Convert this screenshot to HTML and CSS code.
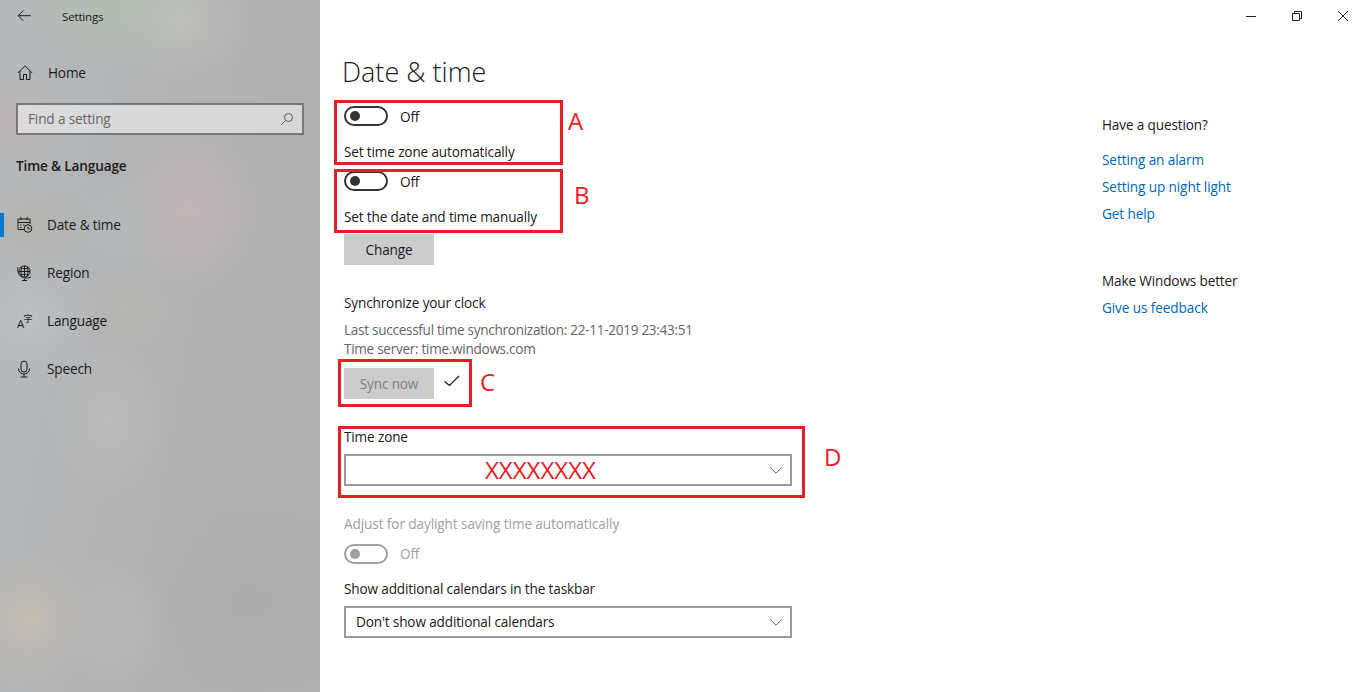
FILE: index.html
```html
<!DOCTYPE html>
<html lang="en">
<head>
  <meta charset="UTF-8" />
  <title>Settings</title>
  <link rel="stylesheet" href="styles.css">
</head>
<body>

<div class="ventana">

  <nav class="lateral">
    <div class="titulo-app">
      <svg class="icono" width="16" height="16" viewBox="0 0 16 16"><path d="M1.300 7.700H14M6.300 2.500 1.200 7.700l5.100 5.100" /></svg>
      <span>Settings</span>
    </div>

    <div class="item-home">
      <svg class="icono" width="16" height="16" viewBox="0 0 16 16"><path d="M.8 8 8 .8 15.200 8M3 6v8.500h3.500V9.500h3v5H13V6" /></svg>
      <span>Home</span>
    </div>

    <div class="buscador">
      <span>Find a setting</span>
      <svg class="icono-busca" width="14" height="14" viewBox="0 0 14 14"><circle cx="8.500" cy="5.500" r="4" /><path d="M5.600 8.400 1 13" /></svg>
    </div>

    <div class="seccion">Time &amp; Language</div>

    <div class="item activo">
      <svg class="icono" width="16" height="18" viewBox="0 0 16 18"><path d="M7 13.500H1V3h12v5M1 6.500h12M4 1v3M10 1v3M3 9h1.500M6 9h1.500M3 11.500h1.500" /><circle cx="11" cy="12.500" r="3.800" /><path d="M11 10.500v2.300h2" /></svg>
      <span>Date &amp; time</span>
    </div>
    <div class="item">
      <svg class="icono" width="16" height="18" viewBox="0 0 16 18"><circle cx="7.500" cy="7.500" r="5.600" /><path d="M2 7.500h11M7.500 2v11M3.400 3.600c2.600 1.600 5.600 1.600 8.200 0M3.400 11.400c2.600-1.600 5.600-1.600 8.200 0M5 2.600c-1.400 3-1.400 6.800 0 9.800M10 2.600c1.400 3 1.400 6.800 0 9.800M1 3c-1 3 0 7 3 9.500 3 2 7 2 10 .5M7.500 15v1.500M5 16.500h5" /></svg>
      <span>Region</span>
    </div>
    <div class="item">
      <svg class="icono" width="16" height="18" viewBox="0 0 16 18"><text x="0" y="15.500" class="letra-a">A</text><text x="6.500" y="9.500" class="letra-zi">字</text></svg>
      <span>Language</span>
    </div>
    <div class="item">
      <svg class="icono" width="16" height="18" viewBox="0 0 16 18"><rect x="4" y="1" width="6" height="11" rx="3" /><path d="M1.500 8.500c0 3.500 2.500 5.500 5.500 5.500s5.500-2 5.500-5.500M7 14v3M3.500 17h7" /></svg>
      <span>Speech</span>
    </div>
  </nav>

  <div class="derecha">
    <div class="barra-titulo">
      <svg class="control" width="10" height="10" viewBox="0 0 10 10"><path d="M0 5.500h10" /></svg>
      <svg class="control" width="10" height="10" viewBox="0 0 10 10"><path d="M.5 2.500h7v7h-7zM2.500 2.500V.5h7v7H7.500" /></svg>
      <svg class="control" width="10" height="10" viewBox="0 0 10 10"><path d="M0 0l10 10M10 0 0 10" /></svg>
    </div>

    <div class="cuerpo">
      <main class="principal">
        <h1>Date &amp; time</h1>

        <div class="grupo grupo-a">
          <div class="fila-switch">
            <span class="switch"></span>
            <span class="estado">Off</span>
          </div>
          <div class="etiqueta-switch">Set time zone automatically</div>
          <div class="marca marca-a"><span class="letra">A</span></div>
        </div>

        <div class="grupo grupo-b">
          <div class="fila-switch">
            <span class="switch"></span>
            <span class="estado">Off</span>
          </div>
          <div class="etiqueta-switch">Set the date and time manually</div>
          <div class="marca marca-b"><span class="letra">B</span></div>
        </div>

        <button class="boton boton-change">Change</button>

        <div class="subtitulo">Synchronize your clock</div>
        <div class="info info-1">Last successful time synchronization: 22-11-2019 23:43:51</div>
        <div class="info">Time server: time.windows.com</div>

        <div class="grupo grupo-c">
          <button class="boton boton-apagado">Sync now</button>
          <svg class="check" width="16" height="12" viewBox="0 0 16 12"><path d="M.5 6.500 5.500 10.500 15 1" /></svg>
          <div class="marca marca-c"><span class="letra">C</span></div>
        </div>

        <div class="grupo grupo-d">
          <div class="subtitulo">Time zone</div>
          <div class="selector selector-zona">
            <span class="tachado">XXXXXXXX</span>
            <svg class="flecha" width="12" height="7" viewBox="0 0 12 7"><path d="M.3.500 6 6.200 11.700.500" /></svg>
          </div>
          <div class="marca marca-d"><span class="letra">D</span></div>
        </div>

        <div class="subtitulo apagado">Adjust for daylight saving time automatically</div>
        <div class="fila-switch fila-apagada">
          <span class="switch"></span>
          <span>Off</span>
        </div>

        <div class="subtitulo calendarios">Show additional calendars in the taskbar</div>
        <div class="selector">
          <span>Don't show additional calendars</span>
          <svg class="flecha" width="12" height="7" viewBox="0 0 12 7"><path d="M.3.500 6 6.200 11.700.500" /></svg>
        </div>
      </main>

      <aside class="ayuda">
        <div>Have a question?</div>
        <a class="primero" href="#">Setting an alarm</a>
        <a href="#">Setting up night light</a>
        <a href="#">Get help</a>
        <div class="mejorar">Make Windows better</div>
        <a href="#">Give us feedback</a>
      </aside>
    </div>
  </div>

</div>

</body>
</html>
```

FILE: styles.css
```css
html, body {
  margin: 0;
  padding: 0;
  height: 100%;
  overflow: hidden;
}

body {
  font-family: "Open Sans", "Noto Sans", sans-serif;
  font-size: 13.6px;
  letter-spacing: -0.15px;
  line-height: 20px;
  color: #1a1a1a;
  background-color: #fff;
}

.ventana {
  display: flex;
  height: 692px;
}

/* panel lateral */
.lateral {
  width: 320px;
  flex-shrink: 0;
  box-sizing: border-box;
  display: flex;
  flex-direction: column;
  background-color: #aeafb1;
  background-image:
    radial-gradient(ellipse 75px 85px at 190px 210px, rgba(202, 182, 184, 0.8), transparent),
    radial-gradient(ellipse 90px 60px at 110px 10px, rgba(178, 196, 172, 0.6), transparent),
    radial-gradient(ellipse 70px 60px at 180px 20px, rgba(196, 198, 188, 0.7), transparent),
    radial-gradient(ellipse 60px 50px at 10px 120px, rgba(198, 178, 176, 0.5), transparent),
    radial-gradient(ellipse 70px 50px at 30px 225px, rgba(180, 178, 160, 0.4), transparent),
    radial-gradient(ellipse 60px 50px at 130px 225px, rgba(178, 192, 190, 0.5), transparent),
    radial-gradient(ellipse 70px 70px at 30px 320px, rgba(192, 194, 200, 0.7), transparent),
    radial-gradient(ellipse 60px 50px at 130px 310px, rgba(186, 184, 172, 0.5), transparent),
    radial-gradient(ellipse 65px 70px at 30px 620px, rgba(198, 190, 178, 0.9), transparent),
    radial-gradient(ellipse 55px 70px at 115px 625px, rgba(186, 186, 186, 0.9), transparent),
    radial-gradient(ellipse 60px 80px at 110px 420px, rgba(190, 192, 192, 0.7), transparent),
    radial-gradient(ellipse 120px 90px at 250px 600px, rgba(172, 172, 170, 0.8), transparent),
    linear-gradient(100deg, #b6b9bb, #aeafb1 70%);
}

.lateral svg {
  fill: none;
  stroke: #1c1c1c;
  stroke-width: 1;
}

.titulo-app {
  height: 32px;
  display: flex;
  align-items: center;
  font-size: 11.5px;
  padding-left: 17px;
}

.titulo-app span {
  margin-left: 29px;
  padding-top: 2px;
}

.item-home {
  display: flex;
  align-items: center;
  height: 20px;
  margin-top: 31px;
  padding-left: 17px;
}

.item-home span {
  margin-left: 15px;
}

.buscador {
  display: flex;
  align-items: center;
  justify-content: space-between;
  box-sizing: border-box;
  height: 32px;
  margin: 20px 16px 0 16px;
  padding: 0 8px 0 10px;
  border: 2px solid #77787a;
  background-color: rgba(255, 255, 255, 0.5);
  color: #666;
}

.lateral .icono-busca {
  stroke: #5c5c5c;
}

.seccion {
  margin-top: 21px;
  padding-left: 16px;
  font-weight: 600;
}

.item {
  display: flex;
  align-items: center;
  height: 48px;
  padding-left: 17px;
}

.seccion + .item {
  margin-top: 25px;
}

.item span {
  margin-left: 14px;
}

.activo {
  position: relative;
}

.activo::before {
  content: "";
  position: absolute;
  left: 0;
  top: 12px;
  width: 4px;
  height: 24px;
  background-color: #0078d7;
}

.lateral .letra-a {
  font-size: 11.5px;
  letter-spacing: 0;
  fill: #1c1c1c;
  stroke: none;
}

.lateral .letra-zi {
  font-family: "Noto Sans CJK SC", sans-serif;
  font-size: 9px;
  letter-spacing: 0;
  fill: #1c1c1c;
  stroke: none;
}

/* parte derecha */
.derecha {
  flex: 1;
  display: flex;
  flex-direction: column;
}

.barra-titulo {
  height: 32px;
  display: flex;
  justify-content: flex-end;
  align-items: center;
  gap: 36px;
  padding-right: 10px;
}

.control {
  fill: none;
  stroke: #222;
  stroke-width: 1;
}

.cuerpo {
  display: flex;
}

.principal {
  width: 782px;
  box-sizing: border-box;
  padding: 20px 0 0 24px;
}

h1 {
  margin: 0 0 0 -2px;
  font-size: 27px;
  letter-spacing: 0;
  line-height: 40px;
  font-weight: 300;
  color: #222;
}

.grupo {
  position: relative;
}

.marca {
  position: absolute;
  border: 3px solid #ed1c24;
  pointer-events: none;
}

.letra {
  position: absolute;
  font-size: 24px;
  letter-spacing: 0;
  line-height: 30px;
  color: #ed1c24;
}

.grupo-a {
  margin-top: 14px;
}

.marca-a {
  left: -10px;
  top: -6px;
  width: 223px;
  height: 59px;
}

.marca-a .letra {
  left: 231px;
  top: 3px;
}

.grupo-b {
  margin-top: 9px;
}

.marca-b {
  left: -10px;
  top: -2px;
  width: 223px;
  height: 58px;
}

.marca-b .letra {
  left: 237px;
  top: 8px;
}

.marca-c {
  left: -6px;
  top: -9px;
  width: 128px;
  height: 42px;
}

.marca-c .letra {
  left: 139px;
  top: 5px;
}

.marca-d {
  left: -6px;
  top: -1px;
  width: 461px;
  height: 66px;
}

.marca-d .letra {
  left: 483px;
  top: 13px;
}

.fila-switch {
  display: flex;
  align-items: center;
  height: 20px;
  gap: 12px;
}

.estado {
  padding-top: 2px;
}

.switch {
  position: relative;
  display: block;
  box-sizing: border-box;
  width: 44px;
  height: 20px;
  border: 2px solid #333;
  border-radius: 10px;
}

.switch::after {
  content: "";
  position: absolute;
  left: 4px;
  top: 3px;
  width: 10px;
  height: 10px;
  border-radius: 50%;
  background-color: #333;
}

.etiqueta-switch {
  margin-top: 16px;
}

.boton {
  display: block;
  width: 90px;
  height: 31px;
  padding: 0;
  border: none;
  background-color: #ccc;
  color: #1a1a1a;
  font-family: inherit;
  font-size: inherit;
  letter-spacing: inherit;
}

.boton-change {
  margin-top: 7px;
}

.subtitulo {
  margin-top: 28px;
}

.info {
  line-height: 19px;
  letter-spacing: -0.3px;
  color: #666;
}

.info-1 {
  margin-top: 7px;
}

.grupo-c {
  display: flex;
  align-items: flex-start;
  margin-top: 10px;
}

.boton-apagado {
  color: #808080;
}

.check {
  margin: 7px 0 0 10px;
  fill: none;
  stroke: #111;
  stroke-width: 1.1;
}

.grupo-d {
  margin-top: 28px;
}

.grupo-d .subtitulo {
  margin-top: 0;
}

.selector {
  display: flex;
  align-items: center;
  justify-content: space-between;
  box-sizing: border-box;
  width: 448px;
  height: 32px;
  margin-top: 7px;
  padding: 0 8px 0 10px;
  border: 2px solid #999;
}

.selector-zona {
  padding-left: 139px;
}

.tachado {
  font-size: 24px;
  letter-spacing: 0;
  color: #ed1c24;
}

.flecha {
  fill: none;
  stroke: #555;
  stroke-width: 1;
}

.apagado {
  color: #a0a0a0;
  letter-spacing: -0.1px;
}

.fila-apagada {
  margin-top: 10px;
  color: #a0a0a0;
}

.fila-apagada .switch {
  border-color: #a0a0a0;
}

.fila-apagada .switch::after {
  background-color: #a0a0a0;
}

.calendarios {
  margin-top: 15px;
}

/* columna de ayuda */
.ayuda {
  padding-top: 83px;
}

.ayuda a {
  display: block;
  margin-top: 7px;
  color: #0067c0;
  letter-spacing: -0.1px;
  text-decoration: none;
}

.ayuda a.primero {
  margin-top: 15px;
}

.mejorar {
  margin-top: 47px;
}
```
